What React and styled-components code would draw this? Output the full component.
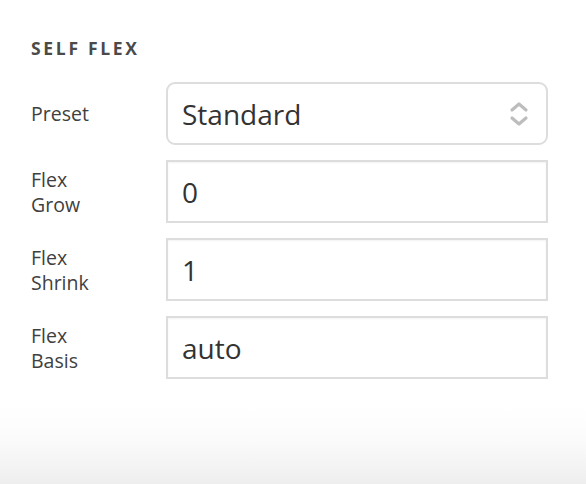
import React from "react";
import styled, { createGlobalStyle } from "styled-components";

const GlobalStyle = createGlobalStyle`
	html, body {
		margin: 0;
		padding: 0;
	}

	body {
		font-family: "Open Sans", "Noto Sans", sans-serif;
		background: #ffffff;
	}
`;

function App() {
	const fields = [
		{ label: ["Flex", "Grow"], value: "0" },
		{ label: ["Flex", "Shrink"], value: "1" },
		{ label: ["Flex", "Basis"], value: "auto" },
	];

	return (
		<Panel>
			<GlobalStyle />
			<Heading>Self Flex</Heading>
			<Rows>
				<Row>
					<Label>Preset</Label>
					<SelectBox>
						<span>Standard</span>
						<svg width="22" height="30" viewBox="0 0 22 30">
							<path
								d="M4 11 L11 5 L18 11"
								fill="none"
								stroke="#bdbdbd"
								strokeWidth="3.2"
								strokeLinecap="round"
								strokeLinejoin="round"
							/>
							<path
								d="M4 19 L11 25 L18 19"
								fill="none"
								stroke="#bdbdbd"
								strokeWidth="3.2"
								strokeLinecap="round"
								strokeLinejoin="round"
							/>
						</svg>
					</SelectBox>
				</Row>
				{fields.map((f) => (
					<Row key={f.label[1]}>
						<Label>
							{f.label[0]}
							<br />
							{f.label[1]}
						</Label>
						<TextField defaultValue={f.value} />
					</Row>
				))}
			</Rows>
		</Panel>
	);
}

export default App;

const Panel = styled.div`
	min-height: 100vh;
	box-sizing: border-box;
	padding: 37px 38px 0 31px;
	background: linear-gradient(
		to bottom,
		#ffffff 0,
		#ffffff 405px,
		#fbfbfb 440px,
		#eeeeee 100%
	);
`;

const Heading = styled.h2`
	margin: 0 0 23px;
	font-size: 17.5px;
	font-weight: 700;
	letter-spacing: 2.7px;
	line-height: 22px;
	text-transform: uppercase;
	color: #4a4a4a;
`;

const Rows = styled.div`
	display: flex;
	flex-direction: column;
	gap: 15px;
`;

const Row = styled.div`
	display: grid;
	grid-template-columns: 135px 382px;
	align-items: center;
`;

const Label = styled.div`
	font-size: 19.5px;
	line-height: 25px;
	color: #404040;
`;

const SelectBox = styled.div`
	height: 63px;
	box-sizing: border-box;
	display: flex;
	align-items: center;
	justify-content: space-between;
	padding: 0 16px 0 14px;
	border: 2px solid #dddddd;
	border-radius: 9px;
	background: #ffffff;
	font-size: 28px;
	color: #333333;
`;

const TextField = styled.input`
	height: 63px;
	width: 100%;
	box-sizing: border-box;
	padding: 0 14px;
	border: 2px solid #dddddd;
	border-radius: 0;
	box-shadow: inset 0 1px 2px rgba(0, 0, 0, 0.05);
	background: #ffffff;
	font-family: "Open Sans", "Noto Sans", sans-serif;
	font-size: 28px;
	color: #333333;
	outline: none;
`;
